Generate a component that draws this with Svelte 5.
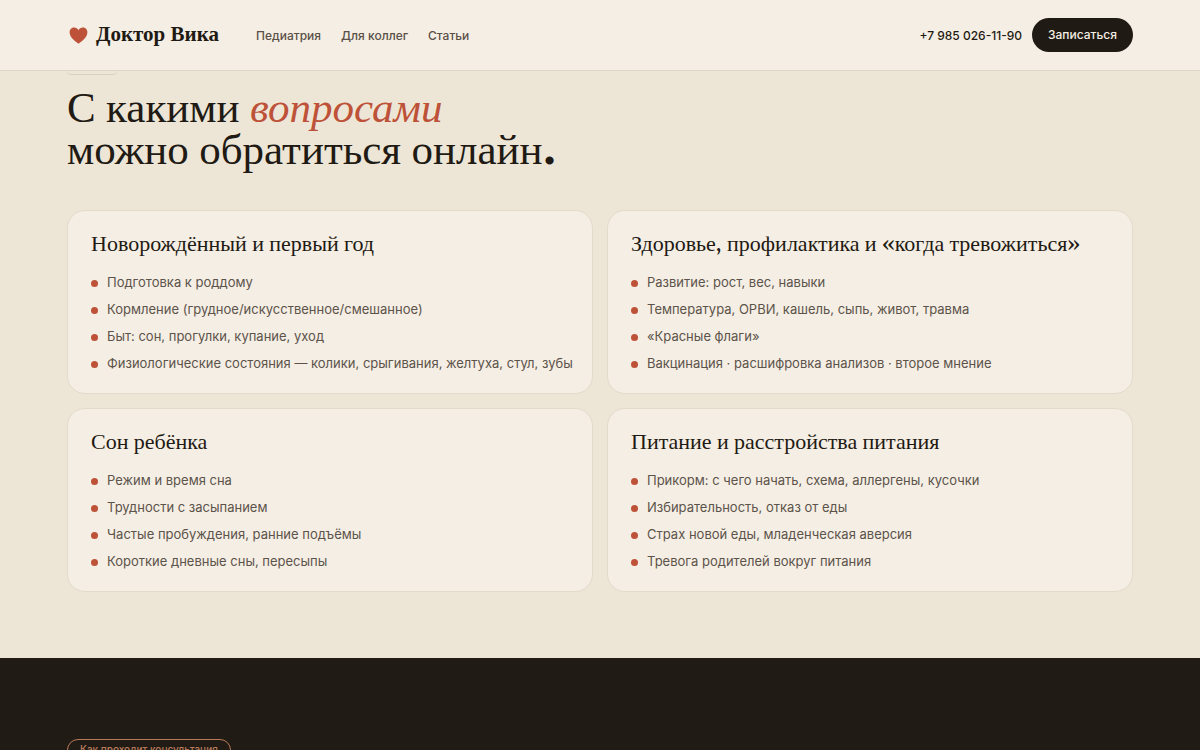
<script>
  const links = [
    { label: 'Педиатрия', href: '#pediatrics' },
    { label: 'Для коллег', href: '#colleagues' },
    { label: 'Статьи', href: '#articles' },
  ];

  const topics = [
    {
      title: 'Новорождённый и первый год',
      items: [
        'Подготовка к роддому',
        'Кормление (грудное/искусственное/смешанное)',
        'Быт: сон, прогулки, купание, уход',
        'Физиологические состояния — колики, срыгивания, желтуха, стул, зубы',
      ],
    },
    {
      title: 'Здоровье, профилактика и «когда тревожиться»',
      items: [
        'Развитие: рост, вес, навыки',
        'Температура, ОРВИ, кашель, сыпь, живот, травма',
        '«Красные флаги»',
        'Вакцинация · расшифровка анализов · второе мнение',
      ],
    },
    {
      title: 'Сон ребёнка',
      items: [
        'Режим и время сна',
        'Трудности с засыпанием',
        'Частые пробуждения, ранние подъёмы',
        'Короткие дневные сны, пересыпы',
      ],
    },
    {
      title: 'Питание и расстройства питания',
      items: [
        'Прикорм: с чего начать, схема, аллергены, кусочки',
        'Избирательность, отказ от еды',
        'Страх новой еды, младенческая аверсия',
        'Тревога родителей вокруг питания',
      ],
    },
  ];
</script>

<div class="page">
  <header>
    <a class="logo" href="#top">
      <svg viewBox="0 0 20 18" width="19" height="17" aria-hidden="true">
        <path d="M10 17.5C8.7 16.6 0.6 11.5 0.6 5.7C0.6 2.7 2.8 0.6 5.4 0.6C7.4 0.6 9.1 1.7 10 3.4C10.9 1.7 12.6 0.6 14.6 0.6C17.2 0.6 19.4 2.7 19.4 5.7C19.4 11.5 11.3 16.6 10 17.5Z" />
      </svg>
      <span>Доктор Вика</span>
    </a>
    <nav>
      {#each links as link}
        <a href={link.href}>{link.label}</a>
      {/each}
    </nav>
    <div class="actions">
      <a class="phone" href="tel:+79850261190">+7 985 026-11-90</a>
      <button type="button">Записаться</button>
    </div>
  </header>

  <section class="topics">
    <div class="edge"></div>
    <h2>С какими <em>вопросами</em><br />можно обратиться онлайн<b>.</b></h2>
    <div class="grid">
      {#each topics as topic}
        <article>
          <h3>{topic.title}</h3>
          <ul>
            {#each topic.items as item}
              <li>{item}</li>
            {/each}
          </ul>
        </article>
      {/each}
    </div>
  </section>

  <section class="process">
    <span class="tag">Как проходит консультация</span>
  </section>
</div>

<style>
  :global(body) {
    margin: 0;
    background: #201b14;
  }

  .page {
    --ink: #1f1a13;
    --paper: #f5eee4;
    --accent: #bd5238;
    --serif: Georgia, Gelasio, "Liberation Serif", serif;
    height: 100vh;
    overflow: hidden;
    color: var(--ink);
    font-family: Inter, "Liberation Sans", sans-serif;
  }

  header {
    display: flex;
    align-items: center;
    height: 70px;
    padding: 0 67px;
    background: var(--paper);
    border-bottom: 1px solid #ddd5c9;
  }

  a {
    color: inherit;
    text-decoration: none;
  }

  .logo {
    display: flex;
    align-items: center;
    gap: 8px;
    padding-left: 2px;
    font: bold 21px/28px var(--serif);
  }

  .logo svg {
    fill: var(--accent);
  }

  nav {
    display: flex;
    gap: 20px;
    margin-left: 37px;
    color: #595047;
    font-size: 12px;
    font-weight: 500;
  }

  .actions {
    display: flex;
    align-items: center;
    gap: 10px;
    margin-left: auto;
    font-size: 12px;
    font-weight: 500;
  }

  button {
    padding: 9px 16px;
    border: 0;
    border-radius: 17px;
    background: var(--ink);
    color: var(--paper);
    font: inherit;
    line-height: 16px;
  }

  .topics {
    padding: 0 67px 66px;
    background: #ede6d7;
  }

  /* lower edge of the rounded label tucked under the header */
  .edge {
    width: 50px;
    height: 3px;
    border-bottom: 1px solid #d9d1c3;
    border-radius: 0 0 12px 12px;
  }

  h2 {
    margin: 14px 0 37px;
    font: 400 43px/42px var(--serif);
  }

  h2 em {
    color: var(--accent);
  }

  .grid {
    display: grid;
    grid-template-columns: 1fr 1fr;
    gap: 14px;
  }

  article {
    padding: 21px 16px 19px 23px;
    border: 1px solid #e3dacb;
    border-radius: 18px;
    background: var(--paper);
  }

  h3 {
    margin: 0 0 14px;
    font: 400 22px/26px var(--serif);
  }

  ul {
    display: grid;
    gap: 6px;
    margin: 0;
    padding: 0;
    list-style: none;
  }

  li {
    display: flex;
    align-items: center;
    gap: 9px;
    color: #5c534a;
    font-size: 13px;
    line-height: 21px;
  }

  li::before {
    content: "";
    flex: none;
    width: 7px;
    height: 7px;
    margin-top: 2px;
    border-radius: 50%;
    background: var(--accent);
  }

  .process {
    padding: 81px 67px;
    background: #201b14;
  }

  .tag {
    display: block;
    width: fit-content;
    padding: 2px 12px 4px;
    border: 1px solid #b9795a;
    border-radius: 12px;
    color: #b9795a;
    font-size: 10px;
    font-weight: 500;
    line-height: 14px;
  }
</style>
